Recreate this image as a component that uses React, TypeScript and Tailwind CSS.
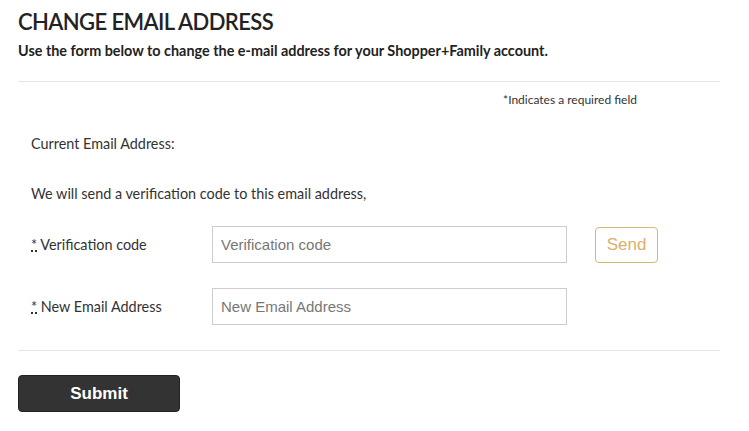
export default function App() {
  return (
    <div className="bg-white w-[749px] h-[431px] text-[#333] font-['Lato','Noto_Sans',sans-serif]">
      <div className="ml-[18px] w-[702px] pt-[8px]">
        <h1 className="text-[22px] leading-[28px] tracking-[-0.6px] font-semibold text-[#222]">CHANGE EMAIL ADDRESS</h1>
        <p className="mt-[6px] text-[14.4px] leading-[18px] font-bold text-[#222]">
          Use the form below to change the e-mail address for your Shopper+Family account.
        </p>
        <div className="mt-[21px] border-t border-[#e5e5e5]" />
        <div className="mt-[11px] pr-[83px] text-right text-[12px] leading-[14px]">*Indicates a required field</div>
        <div className="pl-[13px]">
          <div className="mt-[28px] text-[14.4px] leading-[18px]">Current Email Address:</div>
          <div className="mt-[32px] text-[14.4px] leading-[18px]">We will send a verification code to this email address,</div>
          <div className="mt-[23px] flex items-center">
            <label className="w-[181px] text-[14.4px]">
              <abbr className="no-underline border-b-2 border-dotted border-[#333] leading-[10px] inline-block h-[12px]">*</abbr> Verification code
            </label>
            <input
              placeholder="Verification code"
              className="w-[355px] h-[37px] border border-[#ccc] px-[8px] text-[15px] font-['Liberation_Sans',Arial,sans-serif] placeholder:text-[#777] outline-none"
            />
            <button className="ml-[28px] w-[63px] h-[36px] border border-[#dcb66f] rounded-[4px] text-[#d9b06a] text-[17px] font-['Liberation_Sans',Arial,sans-serif]">
              Send
            </button>
          </div>
          <div className="mt-[25px] flex items-center">
            <label className="w-[181px] text-[14.4px]">
              <abbr className="no-underline border-b-2 border-dotted border-[#333] leading-[10px] inline-block h-[12px]">*</abbr> New Email Address
            </label>
            <input
              placeholder="New Email Address"
              className="w-[355px] h-[37px] border border-[#ccc] px-[8px] text-[15px] font-['Liberation_Sans',Arial,sans-serif] placeholder:text-[#777] outline-none"
            />
          </div>
        </div>
        <div className="mt-[25px] border-t border-[#e5e5e5]" />
        <button className="mt-[24px] w-[162px] h-[37px] bg-[#333] rounded-[4px] text-white text-[17px] font-bold font-['Liberation_Sans',Arial,sans-serif] border border-[#222]">
          Submit
        </button>
      </div>
    </div>
  );
}
